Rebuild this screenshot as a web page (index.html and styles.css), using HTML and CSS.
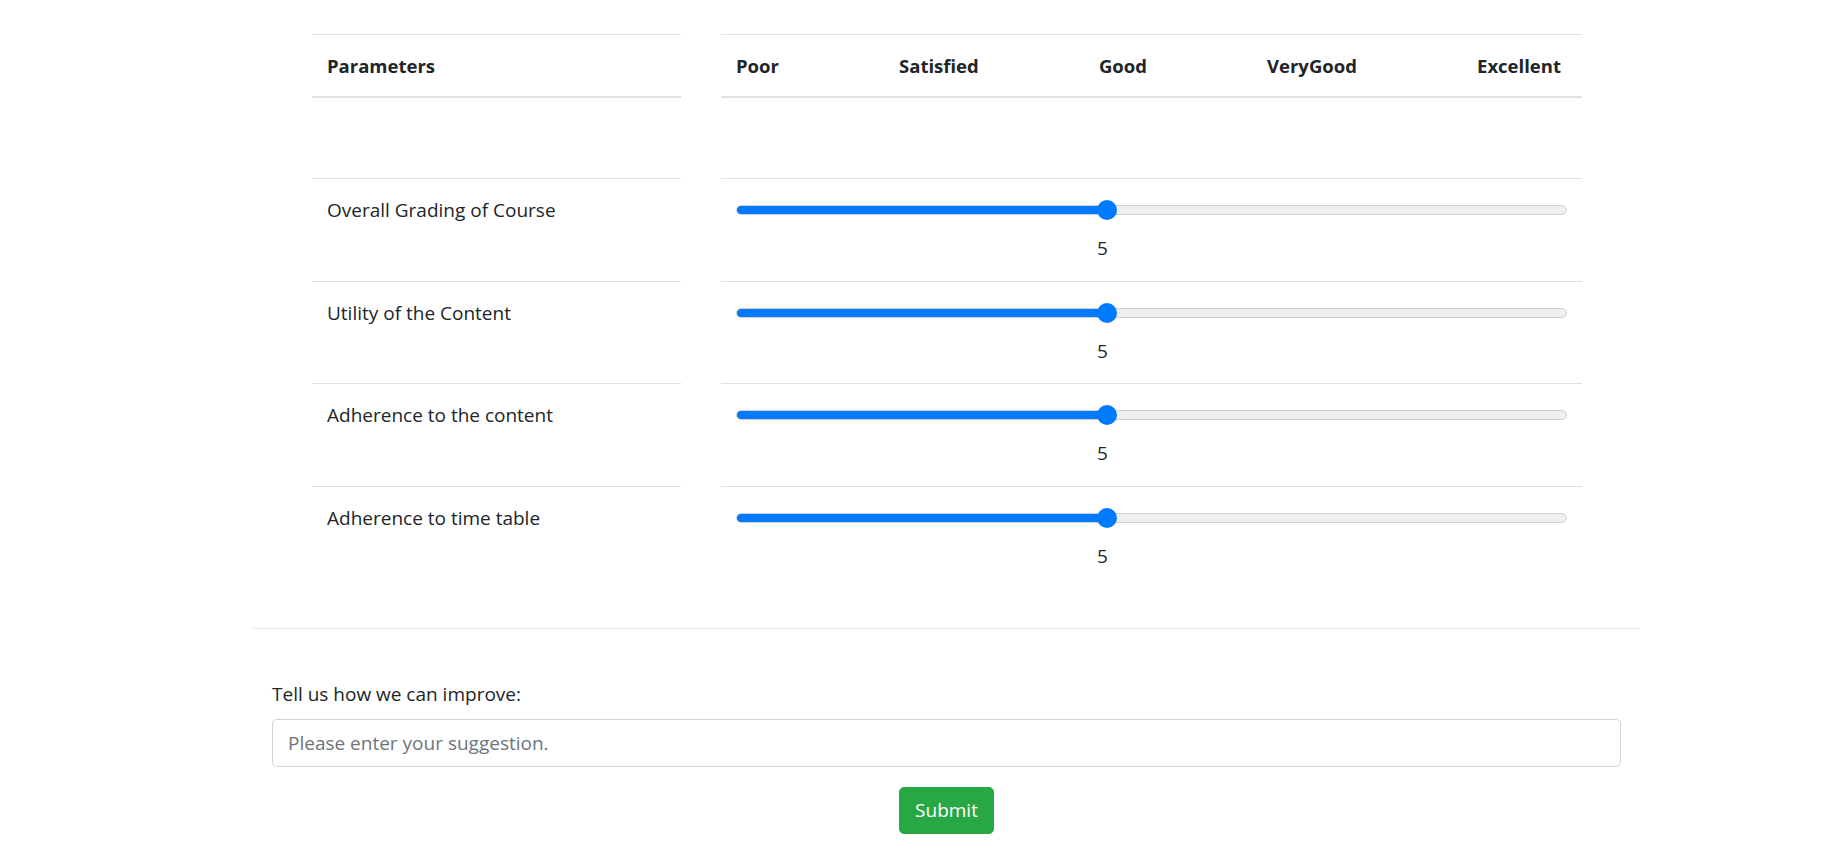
FILE: index.html
```html
<!DOCTYPE html>
<html lang="en">
<head>
<meta charset="utf-8">
<title>Course Feedback</title>
<link rel="stylesheet" href="styles.css">
</head>
<body>
<div class="page">
  <div class="ratings">
    <div class="cell head">Parameters</div>
    <div class="cell head"><div class="scale"><span>Poor</span><span>Satisfied</span><span>Good</span><span>VeryGood</span><span>Excellent</span></div></div>
    <div class="spacer"></div>
    <div class="spacer"></div>

    <div class="cell param">Overall Grading of Course</div>
    <div class="cell rate">
      <input class="slider" type="range" min="1" max="10" value="5" style="--fill: 44.5%">
      <div class="val"><span style="margin-left: 361px">5</span></div>
    </div>

    <div class="cell param">Utility of the Content</div>
    <div class="cell rate">
      <input class="slider" type="range" min="1" max="10" value="5" style="--fill: 44.5%">
      <div class="val"><span style="margin-left: 361px">5</span></div>
    </div>

    <div class="cell param">Adherence to the content</div>
    <div class="cell rate">
      <input class="slider" type="range" min="1" max="10" value="5" style="--fill: 44.5%">
      <div class="val"><span style="margin-left: 361px">5</span></div>
    </div>

    <div class="cell param">Adherence to time table</div>
    <div class="cell rate">
      <input class="slider" type="range" min="1" max="10" value="5" style="--fill: 44.5%">
      <div class="val"><span style="margin-left: 361px">5</span></div>
    </div>
  </div>

  <hr class="rule">

  <form class="feedback">
    <label class="label" for="suggestion">Tell us how we can improve:</label>
    <input class="field" id="suggestion" type="text" placeholder="Please enter your suggestion.">
    <div class="actions"><button class="btn" type="button">Submit</button></div>
  </form>
</div>
</body>
</html>
```

FILE: styles.css
```css
* { box-sizing: border-box; }

body {
  margin: 0;
  background: #fff;
  color: #212529;
  font-family: "Open Sans", "Noto Sans", sans-serif;
  font-size: 19px;
  line-height: 30px;
}

.page {
  width: 1387px;
  margin-left: 253px;
  padding-top: 34px;
}

.ratings {
  display: grid;
  grid-template-columns: 369px 861px;
  column-gap: 40px;
  padding: 0 58px 20px 59px;
  margin-bottom: 20px;
}

.cell {
  padding: 15px;
  border-top: 1px solid #dee2e6;
}

.param { padding-top: 16px; }

.head {
  font-weight: 700;
  font-size: 18.5px;
  padding-top: 16px;
  padding-bottom: 15px;
  border-bottom: 2px solid #dee2e6;
}

.scale {
  display: flex;
  justify-content: space-between;
  padding-right: 6px;
}

.spacer { height: 80px; }

.rate { padding-bottom: 17.5px; }

.slider {
  -webkit-appearance: none;
  appearance: none;
  display: block;
  width: 100%;
  height: 20px;
  margin: 6px 0 0;
  background: transparent;
}

.slider::-webkit-slider-runnable-track {
  height: 10px;
  border-radius: 5px;
  border: 1px solid #cfcfcf;
  background: linear-gradient(to right, #007bff 0, #007bff var(--fill), #efefef var(--fill), #efefef 100%);
}

.slider::-webkit-slider-thumb {
  -webkit-appearance: none;
  appearance: none;
  width: 20px;
  height: 20px;
  border-radius: 50%;
  background: #007bff;
  margin-top: -6px;
  border: none;
}

.val {
  display: flex;
  margin-top: 13px;
}

.rule {
  margin: 20px 0;
  border: 0;
  border-top: 1px solid rgba(0, 0, 0, 0.1);
}

.feedback {
  padding: 30px 19px 0;
  display: flex;
  flex-direction: column;
}

.label {
  margin-bottom: 10px;
}

.field {
  display: block;
  width: 100%;
  height: 47.5px;
  padding: 7.5px 15px;
  font: inherit;
  color: #495057;
  border: 1px solid #ced4da;
  border-radius: 5px;
  outline: none;
}

.field::placeholder { color: #6c757d; }

.actions {
  display: flex;
  justify-content: center;
  margin-top: 20px;
}

.btn {
  font: inherit;
  color: #fff;
  background: #28a745;
  border: 1px solid #28a745;
  border-radius: 5px;
  padding: 7.5px 15px;
  line-height: 30px;
}
```
